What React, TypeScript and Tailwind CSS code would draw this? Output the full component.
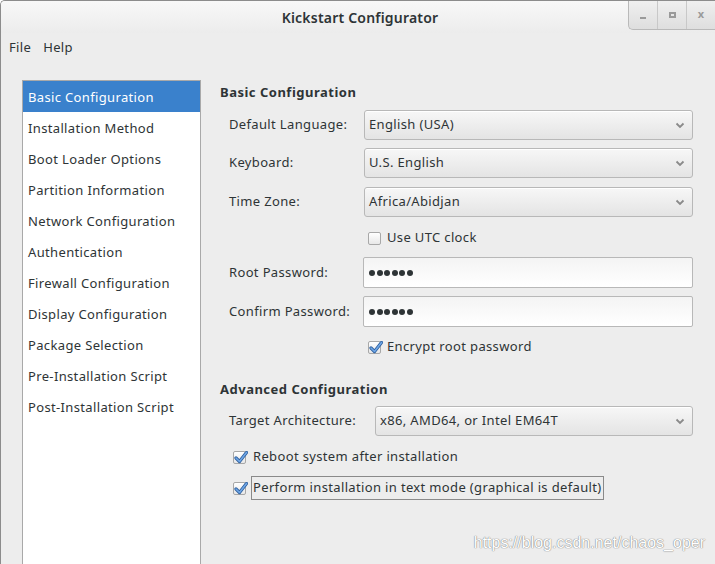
import React from "react";

const font = { fontFamily: '"Noto Sans", "DejaVu Sans", sans-serif' };

function Chevron() {
  return (
    <svg width="10" height="7" viewBox="0 0 10 7" className="shrink-0">
      <path d="M1.5 1.5 L5 5 L8.5 1.5" fill="none" stroke="#8a8a8a" strokeWidth="1.8" />
    </svg>
  );
}

function Combo({ text }: { text: string }) {
  return (
    <div className="flex-1 h-[30px] rounded-[3px] border border-[#b8b8b8] bg-gradient-to-b from-[#f7f7f7] to-[#e4e4e4] flex items-center pl-[4px] pr-[7px] shadow-[inset_0_1px_0_#ffffff]">
      <span className="flex-1 text-[13px] text-[#2e3436]">{text}</span>
      <Chevron />
    </div>
  );
}

function Entry() {
  return (
    <div className="flex-1 h-[31px] rounded-[2px] border border-[#b8b8b8] bg-gradient-to-b from-[#f4f4f4] to-white flex items-center pl-[5px] gap-[1.5px]">
      {[0, 1, 2, 3, 4, 5].map((i) => (
        <div key={i} className="w-[6px] h-[6px] rounded-full bg-[#2e3436]" />
      ))}
    </div>
  );
}

function CheckBox({ checked }: { checked: boolean }) {
  return (
    <div className="relative w-[13px] h-[13px] rounded-[2px] border border-[#a8a8a8] bg-gradient-to-b from-white to-[#e8e8e8] shrink-0">
      {checked && (
        <svg width="14" height="13" viewBox="0 0 14 13" className="absolute left-[0px] top-[-1px]">
          <path d="M2 7 L5.5 10.5 L12.5 1.5" fill="none" stroke="#2d5f9e" strokeWidth="3.2" strokeLinecap="round" strokeLinejoin="round" />
          <path d="M2 7 L5.5 10.5 L12.5 1.5" fill="none" stroke="#6fa6e6" strokeWidth="1.6" strokeLinecap="round" strokeLinejoin="round" />
        </svg>
      )}
    </div>
  );
}

const items = [
  "Basic Configuration",
  "Installation Method",
  "Boot Loader Options",
  "Partition Information",
  "Network Configuration",
  "Authentication",
  "Firewall Configuration",
  "Display Configuration",
  "Package Selection",
  "Pre-Installation Script",
  "Post-Installation Script",
];

export default function App() {
  return (
    <div
      style={font}
      className="relative w-[715px] h-[564px] overflow-hidden bg-[#ededed] text-[#2e3436] border-l border-[#8c8c8c] rounded-tl-[5px] border-t tracking-[0.35px]"
    >
      {/* Title bar */}
      <div className="relative h-[32px] flex items-center justify-center bg-gradient-to-b from-[#f8f8f8] to-[#ececec]">
        <span className="text-[14px] font-semibold text-[#2e3436] ml-[4px] tracking-[0.2px]">Kickstart Configurator</span>
        <div className="absolute right-0 top-[-1px] h-[30px] w-[87px] flex border-l border-b border-[#b9b9b9] rounded-bl-[5px] bg-gradient-to-b from-[#f0f0f0] to-[#dedede]">
          <div className="w-[29px] flex items-center justify-center border-r border-[#c8c8c8]">
            <div className="w-[6px] h-[2px] bg-[#9a9a9a] mt-[6px]" />
          </div>
          <div className="w-[29px] flex items-center justify-center border-r border-[#c8c8c8]">
            <div className="w-[7px] h-[6px] border-2 border-[#9a9a9a]" />
          </div>
          <div className="flex-1 flex items-center justify-center text-[#9a9a9a] text-[11px] font-bold">x</div>
        </div>
      </div>

      {/* Menu bar */}
      <div className="h-[29px] flex items-center gap-[12px] pl-[8px] text-[13px]">
        <span>File</span>
        <span>Help</span>
      </div>

      {/* Body */}
      <div className="flex pl-[21px] pt-[18px] h-[502px]">
        {/* List */}
        <div className="w-[179px] h-[520px] border border-[#a9a9a9] bg-white flex flex-col shrink-0">
          {items.map((t, i) => (
            <div
              key={t}
              className={
                "h-[31px] flex items-center pl-[5px] pt-[2px] text-[13px] " +
                (i === 0 ? "bg-[#3a81cc] text-white" : "text-[#2e3436]")
              }
            >
              {t}
            </div>
          ))}
        </div>

        {/* Right panel */}
        <div className="ml-[19px] w-[473px] flex flex-col">
          <div className="h-[24px] leading-[24px] text-[13px] font-bold tracking-[0.5px]">Basic Configuration</div>

          <div className="mt-[6px] flex items-center pl-[9px]">
            <span className="w-[135px] text-[13px]">Default Language:</span>
            <Combo text="English (USA)" />
          </div>
          <div className="mt-[8px] flex items-center pl-[9px]">
            <span className="w-[135px] text-[13px]">Keyboard:</span>
            <Combo text="U.S. English" />
          </div>
          <div className="mt-[9px] flex items-center pl-[9px]">
            <span className="w-[135px] text-[13px]">Time Zone:</span>
            <Combo text="Africa/Abidjan" />
          </div>

          <div className="mt-[11px] h-[20px] flex items-center pl-[148px] gap-[6px] text-[13px]">
            <CheckBox checked={false} />
            <span>Use UTC clock</span>
          </div>

          <div className="mt-[9px] flex items-center pl-[9px]">
            <span className="w-[134px] text-[13px]">Root Password:</span>
            <Entry />
          </div>
          <div className="mt-[8px] flex items-center pl-[9px]">
            <span className="w-[134px] text-[13px]">Confirm Password:</span>
            <Entry />
          </div>

          <div className="mt-[10px] h-[20px] flex items-center pl-[148px] gap-[6px] text-[13px]">
            <CheckBox checked={true} />
            <span>Encrypt root password</span>
          </div>

          <div className="mt-[20px] h-[24px] leading-[24px] text-[13px] font-bold tracking-[0.5px]">Advanced Configuration</div>

          <div className="mt-[5px] flex items-center pl-[9px]">
            <span className="w-[146px] text-[13px]">Target Architecture:</span>
            <Combo text="x86, AMD64, or Intel EM64T" />
          </div>

          <div className="mt-[11px] h-[20px] flex items-center pl-[13px] gap-[7px] text-[13px]">
            <CheckBox checked={true} />
            <span>Reboot system after installation</span>
          </div>

          <div className="mt-[9px] h-[24px] flex items-center pl-[13px] gap-[5px] text-[13px]">
            <CheckBox checked={true} />
            <span className="border border-[#8a8a8a] px-[1px] h-[24px] flex items-center">
              Perform installation in text mode (graphical is default)
            </span>
          </div>
        </div>
      </div>

      <div
        className="absolute right-[10px] bottom-[9px] text-[16px] tracking-normal text-white [text-shadow:0_0_1px_#777,0_0_1px_#888]"
        style={{ fontFamily: '"Liberation Sans", Arial, sans-serif' }}
      >
        https://blog.csdn.net/chaos_oper
      </div>
    </div>
  );
}
